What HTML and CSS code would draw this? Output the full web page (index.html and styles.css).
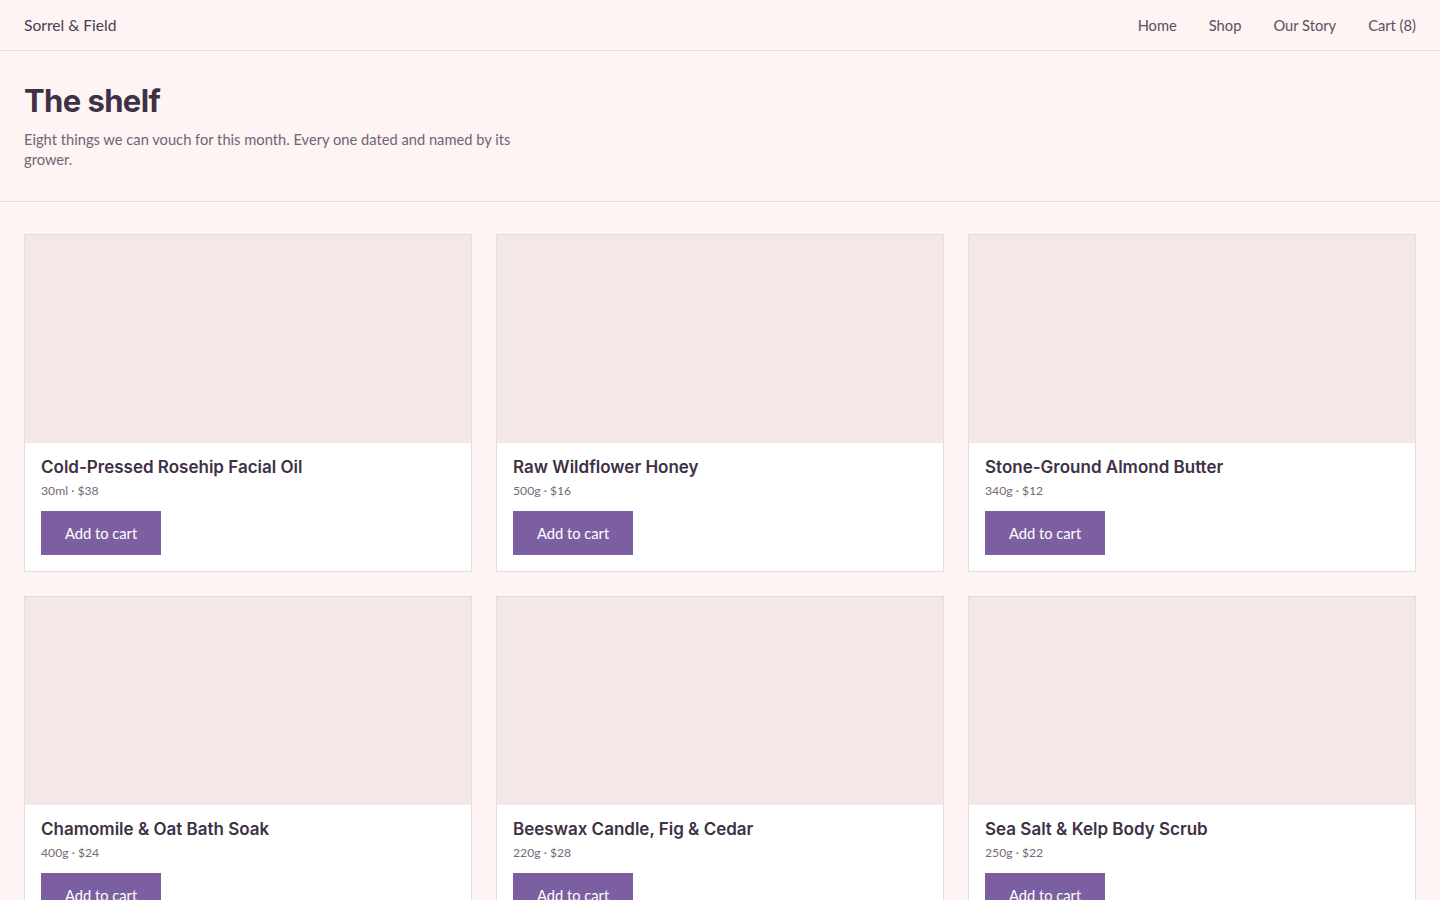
FILE: index.html
```html
<!DOCTYPE html>
<html lang="en">
<head>
<meta charset="utf-8">
<title>Sorrel &amp; Field — The shelf</title>
<link rel="stylesheet" href="styles.css">
</head>
<body>
<header class="site-header">
  <a class="brand" href="#">Sorrel &amp; Field</a>
  <nav class="nav">
    <a href="#">Home</a>
    <a href="#">Shop</a>
    <a href="#">Our Story</a>
    <a href="#">Cart (8)</a>
  </nav>
</header>
<section class="hero">
  <h1>The shelf</h1>
  <p>Eight things we can vouch for this month. Every one dated and named by its grower.</p>
</section>
<main class="grid">
  <article class="card">
    <div class="thumb"></div>
    <div class="body">
      <h2>Cold-Pressed Rosehip Facial Oil</h2>
      <p class="meta">30ml · $38</p>
      <button class="btn">Add to cart</button>
    </div>
  </article>
  <article class="card">
    <div class="thumb"></div>
    <div class="body">
      <h2>Raw Wildflower Honey</h2>
      <p class="meta">500g · $16</p>
      <button class="btn">Add to cart</button>
    </div>
  </article>
  <article class="card">
    <div class="thumb"></div>
    <div class="body">
      <h2>Stone-Ground Almond Butter</h2>
      <p class="meta">340g · $12</p>
      <button class="btn">Add to cart</button>
    </div>
  </article>
  <article class="card">
    <div class="thumb"></div>
    <div class="body">
      <h2>Chamomile &amp; Oat Bath Soak</h2>
      <p class="meta">400g · $24</p>
      <button class="btn">Add to cart</button>
    </div>
  </article>
  <article class="card">
    <div class="thumb"></div>
    <div class="body">
      <h2>Beeswax Candle, Fig &amp; Cedar</h2>
      <p class="meta">220g · $28</p>
      <button class="btn">Add to cart</button>
    </div>
  </article>
  <article class="card">
    <div class="thumb"></div>
    <div class="body">
      <h2>Sea Salt &amp; Kelp Body Scrub</h2>
      <p class="meta">250g · $22</p>
      <button class="btn">Add to cart</button>
    </div>
  </article>
</main>
</body>
</html>
```
FILE: styles.css
```css
* { box-sizing: border-box; }
html, body { margin: 0; padding: 0; }
body {
  background: #fdf4f3;
  color: #3e3145;
  font-family: "Lato", "Noto Sans", sans-serif;
}
a { color: inherit; text-decoration: none; }

.site-header {
  height: 51px;
  display: flex;
  align-items: center;
  justify-content: space-between;
  padding: 0 24px;
  border-bottom: 1px solid #e6dcdc;
}
.brand {
  font-size: 15.6px;
  color: #4a4050;
}
.nav {
  display: flex;
  gap: 32px;
  font-size: 14.7px;
  color: #5a5060;
}

.hero {
  padding: 32px 24px 32px;
  border-bottom: 1px solid #e6dcdc;
}
.hero h1 {
  margin: 0;
  font-family: "Inter", sans-serif;
  font-weight: 700;
  font-size: 31px;
  line-height: 36px;
  letter-spacing: -0.6px;
  color: #3e3145;
}
.hero p {
  margin: 10px 0 0;
  max-width: 520px;
  font-size: 14.7px;
  line-height: 20px;
  color: #6f6573;
}

.grid {
  display: grid;
  grid-template-columns: repeat(3, 1fr);
  gap: 24px;
  padding: 32px 24px;
}
.card {
  background: #ffffff;
  border: 1px solid #e6dcdc;
}
.thumb {
  height: 208px;
  background: #f3e8e6;
}
.body {
  padding: 13px 16px 16px;
}
.body h2 {
  margin: 0;
  font-family: "Inter", sans-serif;
  font-weight: 600;
  font-size: 17px;
  line-height: 22px;
  color: #3e3145;
}
.meta {
  margin: 4px 0 0;
  font-size: 12.2px;
  line-height: 18px;
  color: #76697a;
}
.btn {
  display: block;
  margin-top: 11px;
  height: 44px;
  padding: 0 24px;
  border: 0;
  background: #7b5fa0;
  color: #ffffff;
  font-family: "Lato", "Noto Sans", sans-serif;
  font-size: 14.7px;
  cursor: pointer;
}
```
